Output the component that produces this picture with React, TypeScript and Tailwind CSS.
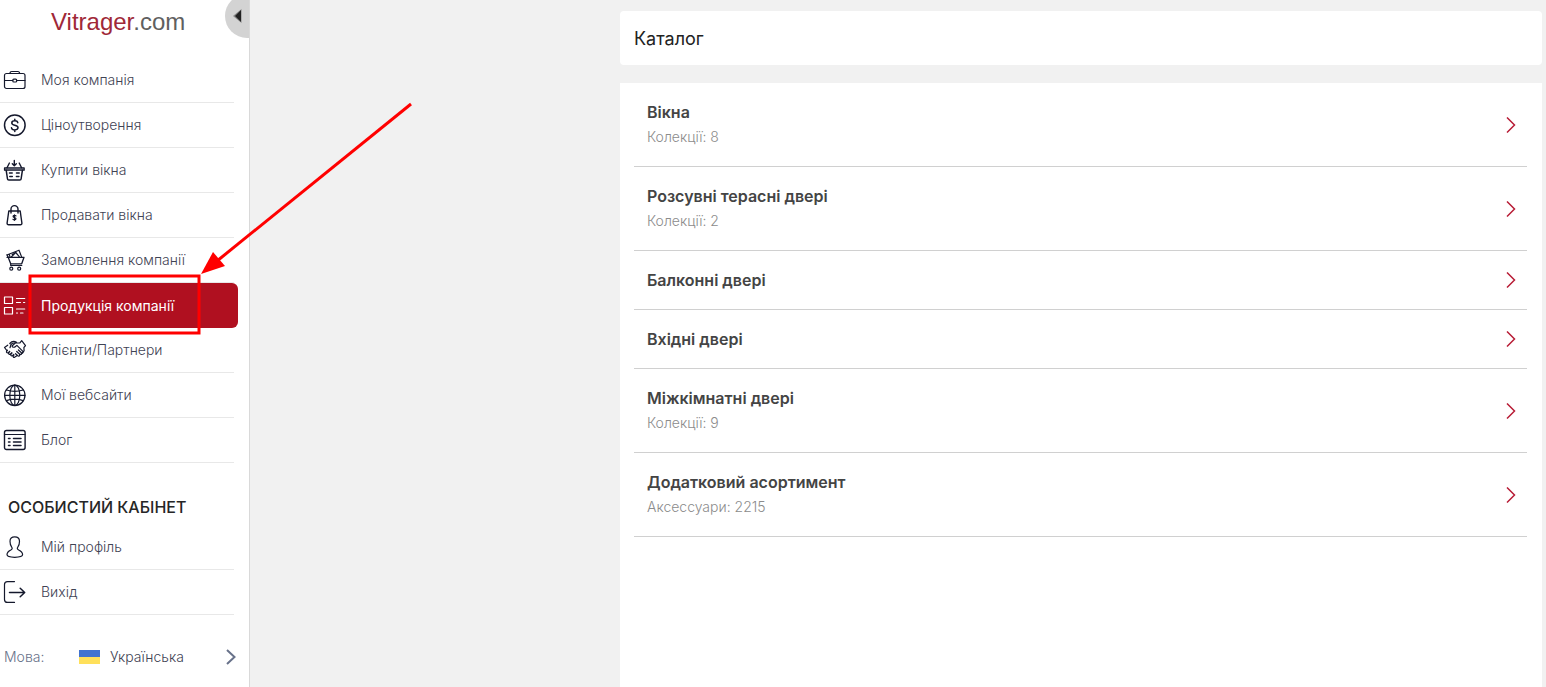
import React from 'react';

type MenuItem = {
    label: string;
    icon: React.ReactNode;
    active?: boolean;
};

type Category = {
    title: string;
    note?: string;
};

const Icon = ({ children }: { children: React.ReactNode }) => (
    <svg
        className="h-6 w-6 shrink-0"
        viewBox="0 0 24 24"
        fill="none"
        stroke="currentColor"
        strokeWidth="1.2"
        strokeLinecap="round"
        strokeLinejoin="round"
        aria-hidden="true"
    >
        {children}
    </svg>
);

const BriefcaseIcon = () => (
    <Icon>
        <rect x="1.5" y="5.5" width="20.5" height="15" rx="2" />
        <path d="M7 5.5c0-1.4.7-2 1.8-2h6c1.1 0 1.8.6 1.8 2M1.5 12.5h8.3M22 12.5h-8.3" />
        <rect x="9.8" y="11.2" width="3.9" height="2.8" rx="1" />
    </Icon>
);

const DollarIcon = () => (
    <Icon>
        <circle cx="11.8" cy="12.3" r="10.3" strokeWidth="1.5" />
        <path d="M14.8 9.7c-.3-1.3-1.4-1.9-3-1.9s-3 .8-3 2.1c0 1.5 1.3 1.9 3 2.3s3.2.9 3.2 2.4-1.4 2.3-3.2 2.3-3-.8-3.3-2.1M11.8 6.2v1.6M11.8 16.9v1.6" strokeWidth="1.5" />
    </Icon>
);

const BasketIcon = () => (
    <Icon>
        <path d="M11.3 2.5v5M9.3 5.7l2 2 2-2M6.4 5 4 9.7M16.2 5l2.4 4.7" strokeWidth="1.4" />
        <path d="M1.5 9.9h19.7v2.3H1.5z" fill="currentColor" fillOpacity="0.45" />
        <path d="m3.2 12.3 1.3 8.7c.1.8.6 1.1 1.3 1.1h11c.7 0 1.2-.3 1.3-1.1l1.3-8.7" strokeWidth="1.5" />
        <path d="M6.5 15h2.7M6.8 18.5h2.5M13.5 15h2.7M13.4 18.5h2.5" strokeWidth="1.5" />
    </Icon>
);

const BagIcon = () => (
    <Icon>
        <path d="M5.8 8h11.4l1.7 12c.1 1-.5 1.7-1.5 1.7H5.6c-1 0-1.6-.7-1.5-1.7z" strokeWidth="1.4" />
        <path d="M8 10V6.1a3.5 3.5 0 0 1 7 0V10" strokeWidth="1.4" />
        <path d="M13 12.9c-.8-.8-2.9-.6-2.9.6 0 1.4 2.9.8 2.9 2.3 0 1.2-2.2 1.4-3 .5M11.5 11.9v5.4" />
    </Icon>
);

const CartIcon = () => (
    <Icon>
        <path d="M4 9.3h17M21 9.3l-2.3 6.5H7.7L4.8 8.3 3.9 6.9" strokeWidth="1.3" />
        <path d="M4.5 6.7 16 2.2l2.6 6.7M7 9 6.2 6.2M8.5 8.7l4.3-4.2 3.4 4.2M9.2 6.5l3-1.4" />
        <path d="M7.7 15.8v1.7h11.1" />
        <circle cx="8.3" cy="20.7" r="1.5" />
        <circle cx="16.2" cy="20.7" r="1.5" />
    </Icon>
);

const ProductsIcon = () => (
    <Icon>
        <rect x="1.5" y="3" width="8" height="6.5" />
        <rect x="1.5" y="13.5" width="8" height="6.5" />
        <path d="M13.5 4.5h8.2M13.5 8.5h4M20.5 8.5h1.2M13.5 15h8.2M13.5 19h1M17.5 19h2.5" />
    </Icon>
);

const HandshakeIcon = () => (
    <Icon>
        <path d="M6.8 5.5c2-2.3 4.4-2.5 6.7-1.2M7 9.7l1-3.2c1.6-1.9 3.4-1.8 5.5-1.5l3.4-.2 1.8-2.2 3.8 5.1-1.6 1.8.2 3.3-3 3.3" />
        <path d="m1.5 9.5 3.2-2.3M1.5 9.5l2.4 3.2M12 5.2 9 8c.6 1.7 2.5 1.5 3.5.5l1.4-1.1 6 6c.7 1-.4 2.2-1.5 1.4l-3-2.8M18.4 14.9c.5 1.2-.7 2.1-1.7 1.3l-3-2.7M16.500 16.500c.5 1.200-.7 2.100-1.700 1.300l-2.300-2.100" />
        <path d="m4.5 12.2-.8.9c-.8 1.2.5 2.4 1.6 1.5l1.3-1.2M6.800 13.400l-.9 1.100c-.9 1.200.4 2.400 1.500 1.500l1.400-1.300M9 15l-1 1.200c-.8 1.100.4 2.300 1.500 1.400l1.200-1.100M11 17l-.6.8c-.7 1.100.4 2.200 1.500 1.300l2-1.400" />
    </Icon>
);

const GlobeIcon = () => (
    <Icon>
        <circle cx="11.8" cy="12.3" r="10.2" strokeWidth="1.3" />
        <ellipse cx="11.8" cy="12.3" rx="5" ry="10.2" />
        <path d="M11.8 2.1v20.4M1.6 12.3H22M3.5 7c5 1.7 11.6 1.7 16.6 0M3.5 17.6c5-1.7 11.6-1.7 16.6 0" />
    </Icon>
);

const BlogIcon = () => (
    <Icon>
        <rect x="1.5" y="2.5" width="20.6" height="19" rx="2" strokeWidth="1.4" />
        <path d="M1.5 6.5h20.6" />
        <path d="M5.5 10.5H7M5.5 14H7M5.5 17.5H7M10.5 10.5H18M10.5 14H18M10.5 17.5H18" strokeWidth="1.5" />
    </Icon>
);

const ProfileIcon = () => (
    <Icon>
        <path d="M11.7 1.9c-3 0-4.7 1.5-4.7 4.3 0 2.3.3 4.2 1.7 5.9 1 1.3.4 2.2-.9 2.9-2.2 1.1-3.8 2-3.8 4.6 0 1.8 2.9 2.7 7.7 2.7s7.900-.9 7.900-2.700c0-2.600-1.700-3.500-3.900-4.600-1.300-.7-1.900-1.600-.9-2.900 1.400-1.700 1.700-3.600 1.700-5.900 0-2.800-1.700-4.300-4.800-4.300z" />
    </Icon>
);

const ExitIcon = () => (
    <Icon>
        <path d="M11.5 1.6h-7c-1.7 0-3 1.3-3 3v14.8c0 1.7 1.3 3 3 3h7" />
        <path d="M6.500 12.500h15M17.200 8.200l4.500 4.300-4.500 4.300" strokeWidth="1.5" />
    </Icon>
);

const companyMenu: MenuItem[] = [
    { label: 'Моя компанія', icon: <BriefcaseIcon /> },
    { label: 'Ціноутворення', icon: <DollarIcon /> },
    { label: 'Купити вікна', icon: <BasketIcon /> },
    { label: 'Продавати вікна', icon: <BagIcon /> },
    { label: 'Замовлення компанії', icon: <CartIcon /> },
    { label: 'Продукція компанії', icon: <ProductsIcon />, active: true },
    { label: 'Клієнти/Партнери', icon: <HandshakeIcon /> },
    { label: 'Мої вебсайти', icon: <GlobeIcon /> },
    { label: 'Блог', icon: <BlogIcon /> },
];

const personalMenu: MenuItem[] = [
    { label: 'Мій профіль', icon: <ProfileIcon /> },
    { label: 'Вихід', icon: <ExitIcon /> },
];

const categories: Category[] = [
    { title: 'Вікна', note: 'Колекції: 8' },
    { title: 'Розсувні терасні двері', note: 'Колекції: 2' },
    { title: 'Балконні двері' },
    { title: 'Вхідні двері' },
    { title: 'Міжкімнатні двері', note: 'Колекції: 9' },
    { title: 'Додатковий асортимент', note: 'Аксессуари: 2215' },
];

const MenuList = ({ items }: { items: MenuItem[] }) => (
    <ul>
        {items.map((item) => (
            <li key={item.label}>
                {item.active ? (
                    <a href="#" aria-current="page" className="mr-[11px] flex h-[45px] items-center gap-3.5 rounded-r-md bg-[#b01020] pl-[3px] text-sm text-white">
                        {item.icon}
                        {item.label}
                    </a>
                ) : (
                    <a href="#" className="mr-[15px] flex h-[45px] items-center gap-3.5 border-b border-[#e8e8e8] pl-[3px] text-sm font-light text-[#3f4354]">
                        <span className="text-[#14182c]">{item.icon}</span>
                        {item.label}
                    </a>
                )}
            </li>
        ))}
    </ul>
);

// Red frame and arrow pointing at the active menu entry
const Highlight = () => (
    <svg className="pointer-events-none absolute top-0 left-0 h-[340px] w-[420px]" viewBox="0 0 420 340" fill="none" aria-hidden="true">
        <rect x="30" y="276" width="169" height="57" stroke="#ff0000" strokeWidth="3" />
        <path d="M411 104 217 261" stroke="#ff0000" strokeWidth="3" />
        <path d="m201 274 12-22 12 14z" fill="#ff0000" />
    </svg>
);

const App = () => {
    return (
        <div className="relative flex min-h-screen bg-[#f1f1f1] font-['Inter','Noto_Sans',sans-serif]">
            <aside className="relative w-[249px] shrink-0 overflow-hidden bg-white">
                <a href="#" className="flex h-[58px] pt-2 pl-[51px] font-['Liberation_Sans',Arial,sans-serif] text-2xl leading-7 text-[#a02838]">
                    <span>
                        Vitrager<span className="text-[#606060]">.com</span>
                    </span>
                </a>
                <button type="button" aria-label="Згорнути меню" className="absolute -top-1.5 -right-5 h-11 w-11 rounded-full bg-[#d3d3d3]">
                    <svg className="ml-2 h-4 w-2.5" viewBox="0 0 10 16" aria-hidden="true">
                        <path d="M8.5 1v14L0 8z" fill="#888888" />
                        <path d="M8 2v12L2 8z" fill="#222222" />
                    </svg>
                </button>

                <nav aria-label="Компанія">
                    <MenuList items={companyMenu} />
                </nav>

                <h2 className="mt-8 pl-2 text-base leading-6 font-medium text-[#262626]">ОСОБИСТИЙ КАБІНЕТ</h2>
                <nav aria-label="Особистий кабінет" className="mt-1.5">
                    <MenuList items={personalMenu} />
                </nav>

                <button type="button" className="mt-7 flex h-7 w-full items-center pr-3 pl-1 text-left text-sm font-light text-[#3f4354]">
                    <span className="w-[75px] text-[#68728a]">Мова:</span>
                    <svg className="mr-2.5 h-3.5 w-[21px]" viewBox="0 0 21 14" aria-hidden="true">
                        <path d="M0 0h21v7H0z" fill="#4173cf" />
                        <path d="M0 7h21v7H0z" fill="#ffe05a" />
                    </svg>
                    <span className="flex-1">Українська</span>
                    <svg className="h-4 w-3" viewBox="0 0 12 16" fill="none" stroke="#68728a" strokeWidth="2" aria-hidden="true">
                        <path d="m2 1 7.5 7L2 15" />
                    </svg>
                </button>
            </aside>

            <main className="flex min-w-0 flex-1 flex-col border-l border-[#d9d9d9] pt-[11px] pr-1 pl-[370px]">
                <header className="mb-[18px] rounded bg-white px-3.5 pt-3.5 pb-3">
                    <h1 className="text-lg leading-7 font-normal text-[#222222]">Каталог</h1>
                </header>

                <section className="flex-1 bg-white pr-[15px] pl-3.5">
                    <ul>
                        {categories.map((category) => (
                            <li key={category.title}>
                                <a href="#" className="flex items-center justify-between border-b border-[#d0d0d0] py-[17px] pr-[11px] pl-[13px]">
                                    <span className="flex flex-col gap-px">
                                        <span className="text-base leading-6 font-semibold text-[#444444]">{category.title}</span>
                                        {category.note && (
                                            <span className="text-sm leading-6 font-light text-[#8c8c8c]">{category.note}</span>
                                        )}
                                    </span>
                                    <svg className="h-4 w-2.5" viewBox="0 0 10 16" fill="none" stroke="#b81c36" strokeWidth="1.5" aria-hidden="true">
                                        <path d="m1 .5 7.5 7.5L1 15.5" />
                                    </svg>
                                </a>
                            </li>
                        ))}
                    </ul>
                </section>
            </main>

            <Highlight />
        </div>
    );
};

export default App;
